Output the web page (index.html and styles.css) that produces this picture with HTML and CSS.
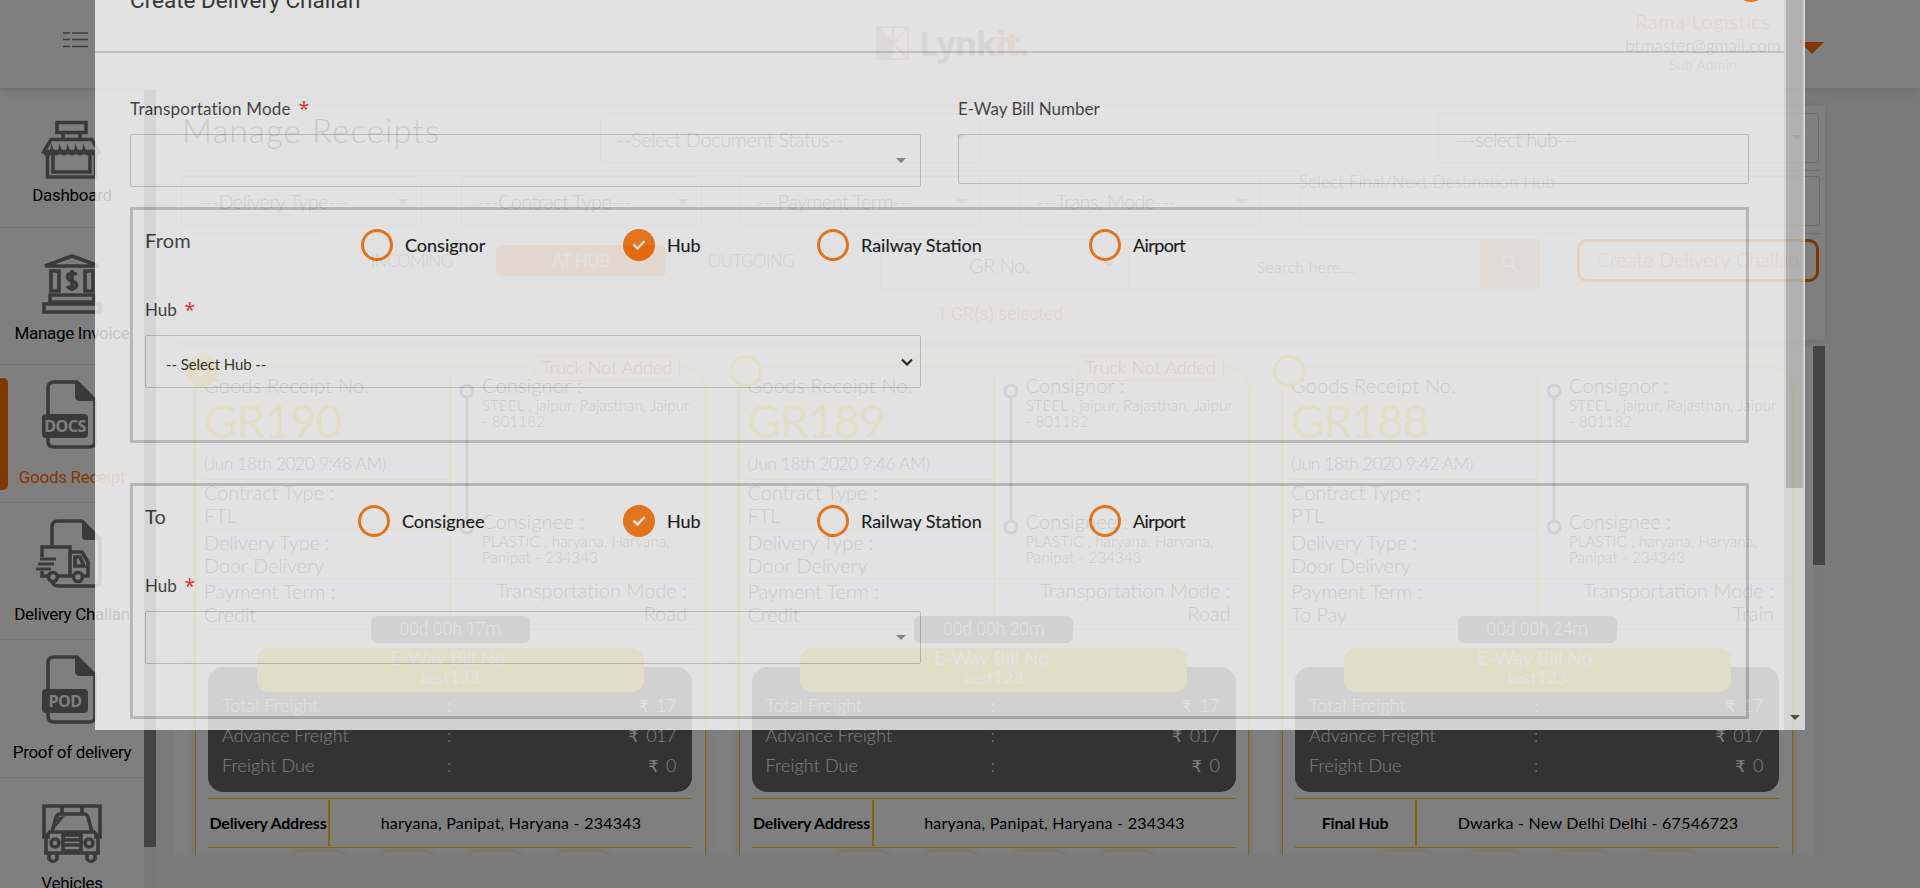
FILE: index.html
```html
<!DOCTYPE html>
<html lang="en">
<head>
<meta charset="utf-8">
<title>Lynkit - Manage Receipts</title>
<link rel="stylesheet" href="styles.css">
</head>
<body>
<div class="page">
  <header class="topbar">
    <svg class="menu" width="25" height="16" viewBox="0 0 25 16"><path d="M0 1h7M9 1h16M0 7.500h7M9 7.500h16M0 14.500h7M9 14.500h16" stroke="#777" stroke-width="1.6"/></svg>
    <div class="logo">
      <svg width="33" height="34" viewBox="0 0 33 34"><path d="M1 1L17 18V33H1z" fill="#b4b4b4"/><path d="M1 1h31v32H1zM1 1l31 32M32 1L17 18" fill="none" stroke="#f0a08c" stroke-width="1.800"/><path d="M17 1v17" stroke="#aaa" stroke-width="1.800"/></svg>
      <span class="logo-text">Lynk<b>it.</b></span>
    </div>
    <div class="user">
      <div class="user-name">Rama Logistics</div>
      <div class="user-mail">btmaster@gmail.com</div>
      <div class="user-role">Sub Admin</div>
    </div>
    <i class="user-caret"></i>
  </header>

  <div class="body">
    <nav class="sidebar">
      <div class="menu-list">
        <a class="item i1"><svg width="60" height="60" viewBox="0 0 60 60"><g class="ln"><path d="M15 2.500h29v10H15zM21 13v7M38 13v7M9 19.500h41l7 12H2zM5.500 34v23h48V34M11 34v18h37V34"/><path d="M2 31c1 5 7 5 8-1 2 5 7 5 8 0 2 5 7 5 8 0 2 5 7 5 8 0 2 5 7 5 8 0 2 5 7 5 8 0 1 6 6 6 7 1"/></g></svg><span>Dashboard</span></a>
        <a class="item i2"><svg width="60" height="60" viewBox="0 0 60 60"><g class="ln"><path d="M3 12L30 2l27 10zM9 17h8v20H9zM43 17h8v20h-8zM8 41h44v7H8zM2 50h56v8H2z"/><path d="M34.500 21c-2-3-9-2-9 2 0 5 9 3 9 8 0 4-7 5-9 1M30 16v21"/></g></svg><span>Manage Invoice</span></a>
        <a class="item i3 active"><svg width="60" height="70" viewBox="0 0 60 70"><path class="ln" d="M6 34V8q0-6 6-6h23l18 18v42q0 5-6 5H12q-6 0-6-6v-4"/><path d="M33 1l22 20H38q-5 0-5-5z" fill="#747474"/><rect y="34" width="46" height="24" rx="4" fill="#747474"/><text x="23" y="51.500" class="tag">DOCS</text></svg><span>Goods Receipt</span></a>
        <a class="item i4"><svg width="68" height="70" viewBox="0 0 68 70"><g class="ln"><path d="M16 26V8q0-6 6-6h24l18 18v42q0 5-6 5H22q-5 0-6-5M6 38V28h28v29M6 52v5h6M22 57h15M35 33h11l6 10v14h-5M39 38h5l4 9h-9z"/><path d="M4 40h16M2 45h16M0 50h15" stroke-width="3"/><circle cx="17" cy="58" r="4.500"/><circle cx="42" cy="58" r="4.500"/></g><path d="M46 1l20 20H49q-3 0-3-4z" fill="#747474"/></svg><span>Delivery Challan</span></a>
        <a class="item i5"><svg width="60" height="70" viewBox="0 0 60 70"><path class="ln" d="M6 34V8q0-6 6-6h23l18 18v42q0 5-6 5H12q-6 0-6-6v-4"/><path d="M33 1l22 20H38q-5 0-5-5z" fill="#747474"/><rect y="34" width="46" height="24" rx="4" fill="#747474"/><text x="23" y="51.500" class="tag">POD</text></svg><span>Proof of delivery</span></a>
        <a class="item i6"><svg width="60" height="60" viewBox="0 0 60 60"><g class="ln"><path d="M8 33H2V2h56v31h-6M10 28l4-15q1-3 4-3h24q3 0 4 3l4 15M8 28h44q4 3 4 8v13H4V36q0-5 4-8zM20 2v8M40 2v8M7 50v5q4 5 8 0v-5M45 50v5q4 5 8 0v-5M21 31h18v16H21zM21 36h18M21 41h18"/><circle cx="13" cy="39" r="4"/><circle cx="47" cy="39" r="4"/></g><path d="M13 24l3-11 7-1z" fill="#747474"/></svg><span>Vehicles</span></a>
      </div>
      <div class="side-scroll"><i></i></div>
    </nav>

    <main class="content">
      <section class="filters">
        <div class="row1">
          <h1>Manage Receipts</h1>
          <div class="sel doc"><span class="t-doc">--Select Document Status--</span><i class="arr"></i></div>
          <div class="sel hub"><span class="t-hub">---select hub---</span><i class="arr"></i></div>
        </div>
        <div class="row2">
          <div class="sel"><span>---Delivery Type---</span><i class="arr"></i></div>
          <div class="sel"><span>---Contract Type---</span><i class="arr"></i></div>
          <div class="sel"><span>---Payment Term---</span><i class="arr"></i></div>
          <div class="sel"><span>---Trans. Mode---</span><i class="arr"></i></div>
          <div class="sel dest"><span class="dest-label">Select Final/Next Destination Hub</span></div>
        </div>
        <div class="row3">
          <div class="tabs"><span>INCOMING</span><span class="on">AT HUB</span><span>OUTGOING</span></div>
          <div class="search">
            <div class="grno"><span>GR No.</span><i class="arr"></i></div>
            <div class="query">Search here....</div>
            <div class="go"><svg width="18" height="18" viewBox="0 0 18 18" fill="none" stroke="#fff" stroke-width="2"><circle cx="6.500" cy="6.500" r="5"/><path d="M10.500 10.500L17 17"/></svg></div>
          </div>
          <div class="create"><span>Create Delivery Challan</span></div>
        </div>
        <div class="picked">1 GR(s) selected</div>
      </section>

      <section class="results">
        <div class="cards">
          <article class="card">
            <i class="pick on"><svg width="32" height="32" viewBox="0 0 32 32"><path d="M10 16l4 4 8-8" fill="none" stroke="#fff" stroke-width="3"/></svg></i>
            <b class="truck">Truck Not Added</b>
            <div class="info">
              <div class="left">
                <div class="c0"><p class="gl">Goods Receipt No.</p><p class="gr">GR190</p><p class="dt">(Jun 18th 2020 9:48 AM)</p></div>
                <div class="cell"><p>Contract Type :</p><p>FTL</p></div>
                <div class="cell"><p>Delivery Type :</p><p>Door Delivery</p></div>
                <div class="cell"><p>Payment Term :</p><p>Credit</p></div>
              </div>
              <div class="right">
                <div class="route">
                  <svg width="18" height="155" viewBox="0 0 18 155"><g fill="none" stroke="#666" stroke-width="3"><circle cx="9" cy="10" r="6"/><circle cx="9" cy="146" r="6"/><path d="M9 17v122"/></g></svg>
                  <div class="stops"><div class="stop"><p>Consignor :</p><small>STEEL , jaipur, Rajasthan, Jaipur<br>- 801182</small></div><div class="stop"><p>Consignee :</p><small>PLASTIC , haryana, Haryana,<br>Panipat - 234343</small></div></div>
                </div>
                <div class="mode"><p>Transportation Mode :</p><p>Road</p></div>
              </div>
            </div>
            <div class="timer">00d 00h 17m</div>
            <div class="eway"><p>E-Way Bill No.</p><small>test123</small></div>
            <div class="freight">
              <div><span>Total Freight</span><span>:</span><span><i>₹</i>17</span></div>
              <div><span>Advance Freight</span><span>:</span><span><i>₹</i>017</span></div>
              <div><span>Freight Due</span><span>:</span><span><i>₹</i>0</span></div>
            </div>
            <div class="addr"><b>Delivery Address</b><span>haryana, Panipat, Haryana - 234343</span></div>
            <div class="acts"><i></i><i></i><i></i><i></i></div>
          </article>

          <article class="card">
            <i class="pick"></i>
            <b class="truck">Truck Not Added</b>
            <div class="info">
              <div class="left">
                <div class="c0"><p class="gl">Goods Receipt No.</p><p class="gr">GR189</p><p class="dt">(Jun 18th 2020 9:46 AM)</p></div>
                <div class="cell"><p>Contract Type :</p><p>FTL</p></div>
                <div class="cell"><p>Delivery Type :</p><p>Door Delivery</p></div>
                <div class="cell"><p>Payment Term :</p><p>Credit</p></div>
              </div>
              <div class="right">
                <div class="route">
                  <svg width="18" height="155" viewBox="0 0 18 155"><g fill="none" stroke="#666" stroke-width="3"><circle cx="9" cy="10" r="6"/><circle cx="9" cy="146" r="6"/><path d="M9 17v122"/></g></svg>
                  <div class="stops"><div class="stop"><p>Consignor :</p><small>STEEL , jaipur, Rajasthan, Jaipur<br>- 801182</small></div><div class="stop"><p>Consignee :</p><small>PLASTIC , haryana, Haryana,<br>Panipat - 234343</small></div></div>
                </div>
                <div class="mode"><p>Transportation Mode :</p><p>Road</p></div>
              </div>
            </div>
            <div class="timer">00d 00h 20m</div>
            <div class="eway"><p>E-Way Bill No.</p><small>test123</small></div>
            <div class="freight">
              <div><span>Total Freight</span><span>:</span><span><i>₹</i>17</span></div>
              <div><span>Advance Freight</span><span>:</span><span><i>₹</i>017</span></div>
              <div><span>Freight Due</span><span>:</span><span><i>₹</i>0</span></div>
            </div>
            <div class="addr"><b>Delivery Address</b><span>haryana, Panipat, Haryana - 234343</span></div>
            <div class="acts"><i></i><i></i><i></i><i></i></div>
          </article>

          <article class="card">
            <i class="pick"></i>
            <div class="info">
              <div class="left">
                <div class="c0"><p class="gl">Goods Receipt No.</p><p class="gr">GR188</p><p class="dt">(Jun 18th 2020 9:42 AM)</p></div>
                <div class="cell"><p>Contract Type :</p><p>PTL</p></div>
                <div class="cell"><p>Delivery Type :</p><p>Door Delivery</p></div>
                <div class="cell"><p>Payment Term :</p><p>To Pay</p></div>
              </div>
              <div class="right">
                <div class="route">
                  <svg width="18" height="155" viewBox="0 0 18 155"><g fill="none" stroke="#666" stroke-width="3"><circle cx="9" cy="10" r="6"/><circle cx="9" cy="146" r="6"/><path d="M9 17v122"/></g></svg>
                  <div class="stops"><div class="stop"><p>Consignor :</p><small>STEEL , jaipur, Rajasthan, Jaipur<br>- 801182</small></div><div class="stop"><p>Consignee :</p><small>PLASTIC , haryana, Haryana,<br>Panipat - 234343</small></div></div>
                </div>
                <div class="mode"><p>Transportation Mode :</p><p>Train</p></div>
              </div>
            </div>
            <div class="timer">00d 00h 24m</div>
            <div class="eway"><p>E-Way Bill No.</p><small>test123</small></div>
            <div class="freight">
              <div><span>Total Freight</span><span>:</span><span><i>₹</i>17</span></div>
              <div><span>Advance Freight</span><span>:</span><span><i>₹</i>017</span></div>
              <div><span>Freight Due</span><span>:</span><span><i>₹</i>0</span></div>
            </div>
            <div class="addr"><b>Final Hub</b><span>Dwarka - New Delhi Delhi - 67546723</span></div>
            <div class="acts"><i></i><i></i><i></i><i></i></div>
          </article>
        </div>
        <div class="list-scroll"><i></i></div>
      </section>
    </main>
  </div>
</div>

<div class="backdrop"></div>

<div class="modal">
  <div class="modal-main">
    <div class="modal-head"><h2>Create Delivery Challan</h2><i class="close"></i></div>
    <div class="modal-body">
      <div class="fields">
        <div class="field"><label class="wide">Transportation Mode <em>*</em></label><div class="input big"><i class="arr"></i></div></div>
        <div class="field"><label>E-Way Bill Number</label><div class="input"></div></div>
      </div>
      <div class="group">
        <div class="radios">
          <h3>From</h3>
          <span class="radio"><i></i><b>Consignor</b></span>
          <span class="radio"><i class="on"><svg width="32" height="32" viewBox="0 0 32 32"><path d="M10.500 15.500l4 4 7-7.500" fill="none" stroke="#fff" stroke-width="2.500"/></svg></i><b>Hub</b></span>
          <span class="radio"><i></i><b>Railway Station</b></span>
          <span class="radio"><i></i><b class="air">Airport</b></span>
        </div>
        <label>Hub <em>*</em></label>
        <div class="input big half"><span>-- Select Hub --</span><svg class="chev" width="12" height="8" viewBox="0 0 12 8"><path d="M1 1.500l5 5 5-5" fill="none" stroke="#111" stroke-width="2.200"/></svg></div>
      </div>
      <div class="group">
        <div class="radios to">
          <h3>To</h3>
          <span class="radio"><i></i><b>Consignee</b></span>
          <span class="radio"><i class="on"><svg width="32" height="32" viewBox="0 0 32 32"><path d="M10.500 15.500l4 4 7-7.500" fill="none" stroke="#fff" stroke-width="2.500"/></svg></i><b>Hub</b></span>
          <span class="radio"><i></i><b>Railway Station</b></span>
          <span class="radio"><i></i><b class="air">Airport</b></span>
        </div>
        <label>Hub <em>*</em></label>
        <div class="input big half"><i class="arr"></i></div>
      </div>
    </div>
  </div>
  <div class="modal-scroll"><i></i><b></b></div>
</div>
</body>
</html>
```
FILE: styles.css
```css
* { box-sizing: border-box; }
body { margin: 0; width: 1920px; height: 888px; overflow: hidden; position: relative; font: 300 20px/24px Lato, "Open Sans", sans-serif; color: #111; }
p, h1, h2, h3 { margin: 0; font-weight: 300; white-space: nowrap; }
span, b, small, label { white-space: nowrap; }
i, em { font-style: normal; }
small { display: block; font-size: 15px; line-height: 16px; }

.page { height: 888px; background: #f7f7f7; overflow: hidden; position: relative; z-index: 0; }
.topbar { height: 88px; background: #fff; display: flex; position: relative; box-shadow: 0 3px 10px rgba(0,0,0,.12); }
.menu { margin: 32px 0 0 63px; flex: none; }
.logo { display: flex; gap: 10px; margin: 26px 0 0 788px; width: 160px; flex: none; }
.logo svg { flex: none; }
.logo-text { font: 700 34px/34px "Open Sans", sans-serif; color: #8c8c8c; letter-spacing: -1.400px; }
.logo-text b { color: #f0907a; }
.user { margin-left: 588px; width: 158px; padding-top: 8px; text-align: center; flex: none; }
.user-name { color: #ff7000; height: 26px; line-height: 26px; letter-spacing: .7px; }
.user-mail { font-size: 17px; height: 24px; letter-spacing: .2px; white-space: nowrap; }
.user-role { color: #666; font-size: 14px; line-height: 14px; letter-spacing: .3px; }
.user-caret { margin: 42px 0 0 18px; width: 0; height: 0; border: 12px solid transparent; border-top-color: #ff7000; border-bottom: 0; }

.body { display: flex; height: 800px; }
.sidebar { display: flex; width: 156px; padding-top: 2px; flex: none; }
.menu-list { width: 144px; background: #fff; }
.item { display: flex; flex-direction: column; align-items: center; height: 137.500px; border-bottom: 1px solid #ececec; position: relative; font: 400 17px/22px Roboto, sans-serif; color: #000; }
.item span { letter-spacing: -.3px; }
.item svg { flex: none; overflow: visible; }
.i1 svg { margin: 30px 0 4px; }
.i2 svg { margin: 26px 0 8px; }
.i3 svg { margin: 15px 0 16px; }
.i4 svg { margin: 16px 4px 14px 0; }
.i5 svg { margin: 15px 0 16px; }
.i6 svg { margin: 26px 0 8px; }
.ln { fill: none; stroke: #747474; stroke-width: 3.600; }
.tag { font: 700 16px "Open Sans", sans-serif; fill: #fff; text-anchor: middle; letter-spacing: -.5px; }
.item.active { color: #ff7000; }
.active::before { content: ""; position: absolute; left: 0; top: 13px; width: 8px; height: 112px; background: #ff7000; border-radius: 0 5px 5px 0; }
.side-scroll { width: 12px; background: #f1f1f1; }
.side-scroll i { display: block; height: 757px; background: #888; }

.content { margin-left: 19px; width: 1650px; padding-top: 18px; }
.filters { height: 234px; background: #fff; box-shadow: 0 0 10px rgba(0,0,0,.12); padding: 7px 6px 0; }
.row1 { display: flex; height: 58px; border-bottom: 1px solid #d9d9d9; }
h1 { width: 419px; font-size: 33px; line-height: 35px; padding-left: 1px; letter-spacing: 1.100px; }
.sel { width: 241px; height: 50px; border: 1px solid #d4d4d4; border-radius: 3px; display: flex; align-items: center; justify-content: space-between; padding: 1px 13px 0 16px; color: #333; }
.arr { width: 0; height: 0; border: 5px solid transparent; border-top-color: #888; border-bottom: 0; }
.sel .arr { margin-top: -2px; }
.doc { width: 380px; }
.hub { width: 381px; margin-left: 458px; color: #000; padding-right: 16px; }
.t-doc { letter-spacing: -.4px; }
.t-hub { letter-spacing: -.65px; }
.row2 { display: flex; gap: 38.500px; height: 63px; padding-top: 5px; border-bottom: 1px solid #d9d9d9; }
.row2 .sel { flex: none; padding-top: 0; letter-spacing: -.6px; }
.row2 .dest { width: 521px; position: relative; }
.row2 .sel .arr { margin-top: 0; }
.dest-label { position: absolute; left: -1px; top: -7px; background: #fff; font-size: 17px; letter-spacing: .15px; color: #555; }
.row3 { display: flex; height: 56px; padding-top: 5px; }
.tabs { display: flex; align-items: center; width: 520px; height: 43px; margin-left: 140px; background: #f4f4f4; border-radius: 6px; font-size: 17px; flex: none; }
.tabs span { width: 175px; text-align: center; line-height: 31px; color: #444; letter-spacing: -.5px; }
.tabs span:first-child { letter-spacing: -.7px; padding-left: 6px; }
.tabs .on { width: 170px; height: 31px; background: #ffa25c; color: #fff; border-radius: 5px; line-height: 31px; font-weight: 400; }
.tabs span:last-child { padding-right: 5px; }
.search { display: flex; width: 660px; height: 50px; margin-left: 39px; border: 1px solid #ddd; flex: none; line-height: 50px; }
.grno { width: 248px; display: flex; align-items: center; border-right: 1px solid #ddd; padding: 1px 14px 0 88px; justify-content: space-between; color: #333; letter-spacing: -.5px; }
.query { width: 352px; text-align: center; font-size: 16px; color: #333; padding: 2px 0 0 4px; letter-spacing: .2px; }
.go { width: 59px; background: #ffb98a; display: flex; align-items: center; justify-content: center; }
.create { width: 242px; height: 43px; margin-left: 37px; border: 3px solid #ff7000; border-radius: 10px; color: #ff7000; text-align: center; line-height: 34px; flex: none; }
.picked { text-align: center; color: #ff7000; font: 300 17.500px/24px Roboto, sans-serif; margin-top: 12px; }

.results { display: flex; height: 509px; margin-top: 6px; overflow: hidden; background: #fff; }
.cards { display: flex; gap: 33px; width: 1638px; padding: 20px 20px 0; flex: none; }
.card { position: relative; width: 510.500px; height: 600px; border: 1px solid #ffd500; border-radius: 25px 25px 0 0; padding: 7px 7px 0; flex: none; box-shadow: 0 0 12px rgba(120,95,0,.2); }
.pick { position: absolute; left: -10px; top: -12px; width: 32px; height: 32px; border: 3px solid #ffd500; border-radius: 50%; background: #fff; z-index: 1; }
.pick.on { background: #ffd500; }
.pick svg { display: block; margin: -3px; }
.truck { position: absolute; left: 338px; top: -12px; width: 146px; height: 26px; border: 1px solid #ffd500; border-radius: 6px; background: #fff; color: #f00; font-weight: 300; font-size: 18px; line-height: 23px; text-align: center; }
.info { display: grid; grid-template-columns: 247px 249px; height: 256px; border-bottom: 1px solid #ffd500; }
.c0 { height: 107px; border-bottom: 1px solid #ffd500; padding-left: 1px; }
.gl { margin-top: -1px; letter-spacing: .2px; }
.gr { font-size: 46px; line-height: 46px; margin: 1px 0 10px; color: #ffd500; font-weight: 400; letter-spacing: -1px; }
.dt { font-size: 17.500px; line-height: 20px; letter-spacing: -.45px; }
.cell { height: 49.700px; border-bottom: 1px solid #ffd500; padding: 1px 0 0 1px; line-height: 23px; letter-spacing: -.1px; }
.cell:last-child { border-bottom: 0; }
.right { border-left: 1px solid #ffd500; height: 242px; }
.route { display: flex; gap: 6px; height: 205px; padding-left: 7px; border-bottom: 1px solid #ffd500; }
.route svg { margin-top: 7px; flex: none; }
.stop { height: 136px; letter-spacing: .15px; }
.stop p { height: 24px; margin-top: -1px; }
.stop + .stop p { margin-top: 0; }
.mode { text-align: right; padding-right: 12px; line-height: 23px; }
.timer { position: relative; width: 159px; height: 27px; margin: -14px auto 5px; background: #666; border-radius: 6px; color: #fff; text-align: center; font: 300 17.500px/26px Roboto, sans-serif; z-index: 1; }
.eway { position: relative; width: 387px; height: 44px; margin: 0 auto; background: #ffd500; border-radius: 12px; color: #fff; text-align: center; z-index: 1; }
.eway p { line-height: 20px; font-size: 19px; font-weight: 400; }
.eway small { font-size: 17.500px; line-height: 20px; font-weight: 400; }
.freight { width: 484px; height: 125px; margin: -25px 0 6px 5px; padding: 23px 16px 0 14px; border-radius: 15px; background: #666; color: #fff; font-size: 18px; }
.freight div { display: grid; grid-template-columns: 225px 20px 1fr; line-height: 30px; letter-spacing: .1px; }
.freight span:last-child { text-align: right; letter-spacing: -.5px; }
.freight i { margin-right: 8px; font: 16px "DejaVu Sans", sans-serif; }
.addr { display: flex; align-items: center; width: 484px; height: 50px; margin-left: 5px; border: solid #ffd500; border-width: 1px 0; font-size: 16px; color: #000; text-align: center; }
.addr b { width: 122px; border-right: 2px solid #ffd500; line-height: 46px; letter-spacing: -.2px; font-weight: 700; }
.addr span { flex: 1; letter-spacing: .25px; font-weight: 400; line-height: 46px; }
.acts { display: flex; gap: 30px; margin: 4px 0 0 86px; }
.acts i { width: 58px; height: 36px; border-radius: 12px; background: #fff; box-shadow: 0 0 7px rgba(255,112,0,.35); }
.list-scroll { width: 12px; background: #f4f4f4; }
.list-scroll i { display: block; height: 219px; background: #888; }

.backdrop { position: absolute; inset: 0; background: rgba(0,0,0,.5); }

.modal { position: absolute; left: 95px; top: 0; width: 1710px; height: 730px; background: #fefefe; opacity: .78; display: flex; overflow: hidden; color: #333; }
.modal-main { width: 1689px; flex: none; }
.modal-head { display: flex; align-items: flex-start; height: 53px; border-bottom: 2px solid #d5d5d5; padding-left: 35px; position: relative; }
h2 { font: 400 22.500px/28px Roboto, sans-serif; margin-top: -14px; color: #222; }
.close { position: absolute; right: 17px; top: -30px; width: 32px; height: 32px; border-radius: 50%; background: #ff7000; }
.modal-body { padding: 44px 35px 0; }
.fields { display: flex; gap: 37px; height: 110px; }
.field { width: 791px; }
label { display: block; font-size: 17px; font-weight: 400; height: 24px; color: #333; }
.wide { letter-spacing: .22px; }
em { color: #f11; font: 400 20px/20px "Open Sans", sans-serif; margin-left: 3px; vertical-align: -1px; }
.input { height: 50px; border: 1.500px solid #c8c8c8; border-radius: 2px; margin-top: 13px; display: flex; align-items: center; justify-content: flex-end; padding-right: 14px; }
.big { height: 53px; }
.group { height: 236px; border: 3px solid #c6c6c6; margin-bottom: 40px; padding: 0 12px; width: 1619px; }
.radios { display: grid; grid-template-columns: 216px 262px 194px 272px 200px; height: 88px; padding-top: 16px; }
.radios.to { grid-template-columns: 213px 265px 194px 272px 200px; }
h3 { font-size: 20px; line-height: 29px; font-weight: 400; color: #333; letter-spacing: .2px; }
.radio { display: flex; height: 38px; padding-top: 3px; gap: 12px; }
.radio i { width: 32px; height: 32px; border: 3px solid #ff7200; border-radius: 50%; flex: none; }
.radio i.on { background: #ff7200; }
.radio svg { display: block; margin: -3px; }
.radio b { font-weight: 400; font-size: 18px; line-height: 32px; color: #000; -webkit-text-stroke: .15px #000; }
.radio .air { letter-spacing: -.6px; }
.half { width: 776px; justify-content: space-between; padding: 0 7px 0 20px; font-size: 15px; font-weight: 400; margin-top: 13px; }
.half span { padding-top: 5px; color: #222; letter-spacing: -.1px; }
.half .arr { margin: 0 7px 0 auto; }
.modal-scroll { width: 21px; background: #eee; padding: 0 2px; }
.modal-scroll i { display: block; height: 488px; background: #c0c0c0; }
.modal-scroll b { display: block; margin: 227px 0 0 4px; width: 0; border: 5px solid transparent; border-top-color: #444; border-bottom: 0; }
```
